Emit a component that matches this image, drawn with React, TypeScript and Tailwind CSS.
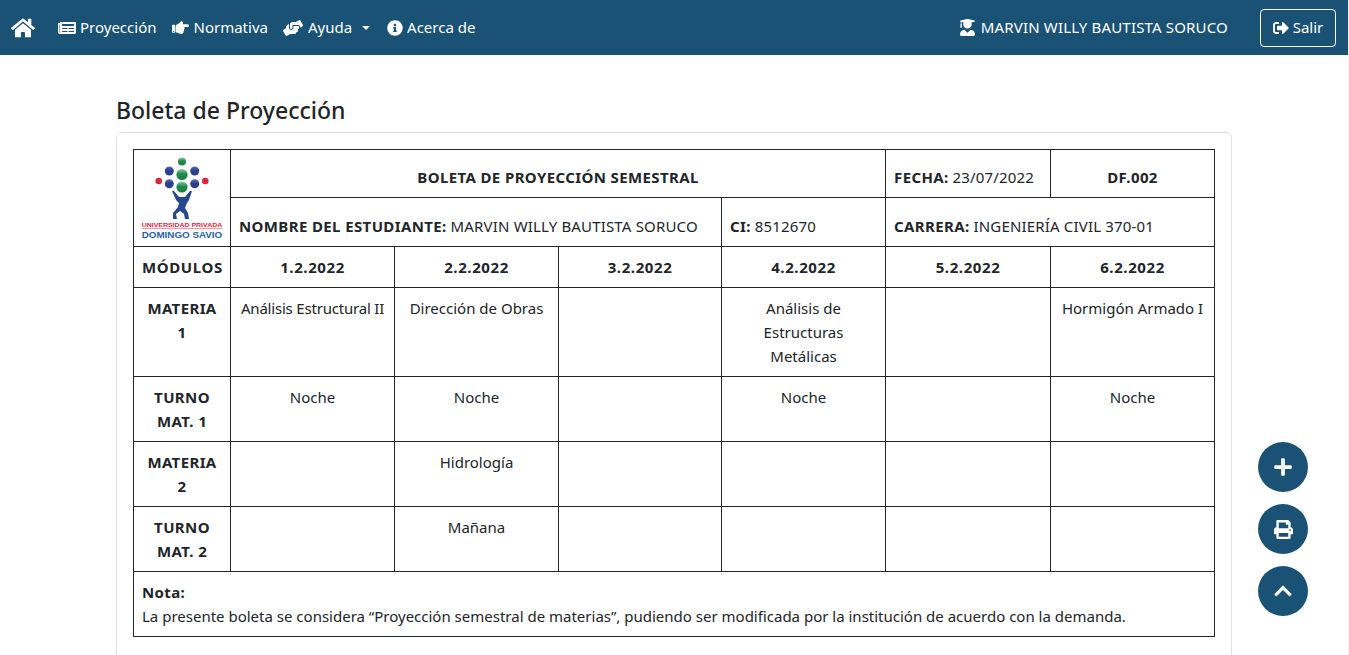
import React from "react";
import { FaHome, FaNewspaper, FaHandPointRight, FaHandsHelping, FaInfoCircle, FaUserGraduate, FaSignOutAlt, FaPlus, FaPrint, FaChevronUp } from "react-icons/fa";

const font = "font-['Noto_Sans','Open_Sans',sans-serif]";
const base = "border border-[#212529] p-2 text-center";
const cell = `${base} align-top`;
const head = `${base} align-bottom`;
const left = `${base} align-bottom text-left`;
const strong = "font-bold tracking-[0.38px]";

function Logo() {
  return (
    <svg width="94" height="94" viewBox="0 0 94 94" className="mx-auto block">
      <defs>
        <linearGradient id="g" x1="0" y1="0" x2="0" y2="1">
          <stop offset="0" stopColor="#8fc9a4" />
          <stop offset="0.45" stopColor="#1f8a4c" />
          <stop offset="1" stopColor="#17803f" />
        </linearGradient>
        <linearGradient id="b" x1="0" y1="0" x2="0" y2="1">
          <stop offset="0" stopColor="#5a6cb0" />
          <stop offset="0.45" stopColor="#2b3f8e" />
          <stop offset="1" stopColor="#2b3f8e" />
        </linearGradient>
      </defs>
      <circle cx="47" cy="10.5" r="4" fill="url(#g)" />
      <circle cx="34.3" cy="20" r="4.5" fill="url(#b)" />
      <circle cx="59.7" cy="20" r="4.5" fill="url(#b)" />
      <circle cx="47" cy="23.5" r="5.6" fill="url(#g)" />
      <circle cx="23.7" cy="30" r="3.3" fill="#e2233d" />
      <circle cx="70.3" cy="30" r="3.3" fill="#e2233d" />
      <circle cx="34.3" cy="32.7" r="4.5" fill="url(#b)" />
      <circle cx="59.7" cy="32.7" r="4.5" fill="url(#b)" />
      <circle cx="47" cy="36" r="5.6" fill="url(#g)" />
      <path d="M37 40 L39 40 L44 46 L50 46 L55 40 L57 40 L54 49 L52 52 L50 57 L53 62 L54 68 L50 68 L49 63 L45 60 L41 63 L42 68 L38 68 L38 62 L43 56 L44 52 L41 49 Z" fill="#27478f" />
      <text x="6.7" y="76" textLength="80.5" lengthAdjust="spacingAndGlyphs" fontSize="5.8" fontWeight="700" fill="#e2233d" fontFamily="'Liberation Sans',sans-serif">UNIVERSIDAD PRIVADA</text>
      <rect x="6.7" y="77.2" width="80.5" height="0.7" fill="#ee6a7c" />
      <text x="6.7" y="86.7" textLength="80.5" lengthAdjust="spacingAndGlyphs" fontSize="9" fontWeight="700" fill="#1f62a8" fontFamily="'Liberation Sans',sans-serif">DOMINGO SAVIO</text>
    </svg>
  );
}

function NavItem({ icon, label, caret, cls }: { icon: React.ReactNode; label: string; caret?: boolean; cls: string }) {
  return (
    <a className={`flex items-center gap-[4px] text-white ${cls}`}>
      {icon}
      <span className="-mt-[2px]">{label}</span>
      {caret && <span className="ml-[5px] border-x-[4.8px] border-t-[4.8px] border-x-transparent border-t-white" />}
    </a>
  );
}

function Fab({ children }: { children: React.ReactNode }) {
  return <button className="w-[50px] h-[50px] rounded-full bg-[#1a5276] text-white flex items-center justify-center">{children}</button>;
}

const B = ({ children }: { children: React.ReactNode }) => <b className={strong}>{children}</b>;
const V = ({ children }: { children: React.ReactNode }) => <span className="tracking-[0.17px]">{children}</span>;

export default function App() {
  return (
    <div className="bg-[#f1f1f1] pr-px">
      <div className={`h-screen overflow-hidden bg-white text-[#212529] text-[15px] leading-[24px] ${font}`}>
        <nav className="h-[55px] bg-[#1a5276] flex items-center pl-[11px] pr-[12px]">
          <a className="text-white"><FaHome size={24} /></a>
          <div className="ml-[23px] flex items-center">
            <NavItem cls="" icon={<FaNewspaper size={18} />} label="Proyección" />
            <NavItem cls="ml-[16px]" icon={<FaHandPointRight size={17} />} label="Normativa" />
            <NavItem cls="ml-[15px] gap-[5px]" icon={<FaHandsHelping size={20} />} label="Ayuda" caret />
            <NavItem cls="ml-[17px]" icon={<FaInfoCircle size={16} />} label="Acerca de" />
          </div>
          <div className="ml-auto flex items-center gap-[32px] text-white">
            <span className="flex items-center gap-[5px]"><FaUserGraduate size={17} /><span className="-mt-[2px] tracking-[0.17px]">MARVIN WILLY BAUTISTA SORUCO</span></span>
            <button className="h-[38px] w-[76px] border border-white rounded flex items-center justify-center gap-[4px]"><FaSignOutAlt size={16} /><span className="-mt-[2px]">Salir</span></button>
          </div>
        </nav>
        <main className="w-[1116px] ml-[116px] pt-[39px]">
          <h1 className="text-[23px] leading-[32px] font-medium mb-[6px]">Boleta de Proyección</h1>
          <div className="border border-[#dfdfdf] rounded-[5px] px-4 pt-4 h-[700px]">
            <table className="border-collapse table-fixed w-[1081px]">
              <colgroup>
                <col className="w-[97px]" />
                <col className="w-[164px]" />
                <col className="w-[164px]" />
                <col className="w-[163px]" />
                <col className="w-[164px]" />
                <col className="w-[165px]" />
                <col className="w-[164px]" />
              </colgroup>
              <tbody>
                <tr className="h-[48px]">
                  <td rowSpan={2} className="border border-[#212529] p-0 align-middle"><Logo /></td>
                  <td colSpan={4} className={`${head} ${strong}`}>BOLETA DE PROYECCIÓN SEMESTRAL</td>
                  <td className={left}><B>FECHA:</B> <V>23/07/2022</V></td>
                  <td className={`${head} ${strong}`}>DF.002</td>
                </tr>
                <tr className="h-[49px]">
                  <td colSpan={3} className={left}><B>NOMBRE DEL ESTUDIANTE:</B> <V>MARVIN WILLY BAUTISTA SORUCO</V></td>
                  <td className={left}><B>CI:</B> <V>8512670</V></td>
                  <td colSpan={2} className={left}><B>CARRERA:</B> <V>INGENIERÍA CIVIL 370-01</V></td>
                </tr>
                <tr className="h-[41px] font-bold tracking-[0.6px]">
                  {["MÓDULOS", "1.2.2022", "2.2.2022", "3.2.2022", "4.2.2022", "5.2.2022", "6.2.2022"].map((h) => (
                    <td key={h} className={cell}>{h}</td>
                  ))}
                </tr>
                <tr className="h-[89px]">
                  <td className={`${cell} ${strong}`}>MATERIA 1</td>
                  <td className={`${cell} tracking-[-0.2px] px-[6px]`}>Análisis Estructural II</td>
                  <td className={cell}>Dirección de Obras</td>
                  <td className={cell}></td>
                  <td className={cell}>Análisis de Estructuras Metálicas</td>
                  <td className={cell}></td>
                  <td className={cell}>Hormigón Armado I</td>
                </tr>
                <tr className="h-[65px]">
                  <td className={`${cell} ${strong}`}>TURNO MAT. 1</td>
                  <td className={cell}>Noche</td>
                  <td className={cell}>Noche</td>
                  <td className={cell}></td>
                  <td className={cell}>Noche</td>
                  <td className={cell}></td>
                  <td className={cell}>Noche</td>
                </tr>
                <tr className="h-[65px]">
                  <td className={`${cell} ${strong}`}>MATERIA 2</td>
                  <td className={cell}></td>
                  <td className={cell}>Hidrología</td>
                  <td className={cell}></td>
                  <td className={cell}></td>
                  <td className={cell}></td>
                  <td className={cell}></td>
                </tr>
                <tr className="h-[65px]">
                  <td className={`${cell} ${strong}`}>TURNO MAT. 2</td>
                  <td className={cell}></td>
                  <td className={cell}>Mañana</td>
                  <td className={cell}></td>
                  <td className={cell}></td>
                  <td className={cell}></td>
                  <td className={cell}></td>
                </tr>
                <tr className="h-[65px]">
                  <td colSpan={7} className={`${cell} text-left`}>
                    <div className={strong}>Nota:</div>
                    <div>La presente boleta se considera “Proyección semestral de materias”, pudiendo ser modificada por la institución de acuerdo con la demanda.</div>
                  </td>
                </tr>
              </tbody>
            </table>
          </div>
        </main>
        <div className="fixed right-[41px] bottom-[39px] flex flex-col gap-[12px]">
          <Fab><FaPlus size={20} /></Fab>
          <Fab><FaPrint size={19} /></Fab>
          <Fab><FaChevronUp size={20} /></Fab>
        </div>
      </div>
    </div>
  );
}
